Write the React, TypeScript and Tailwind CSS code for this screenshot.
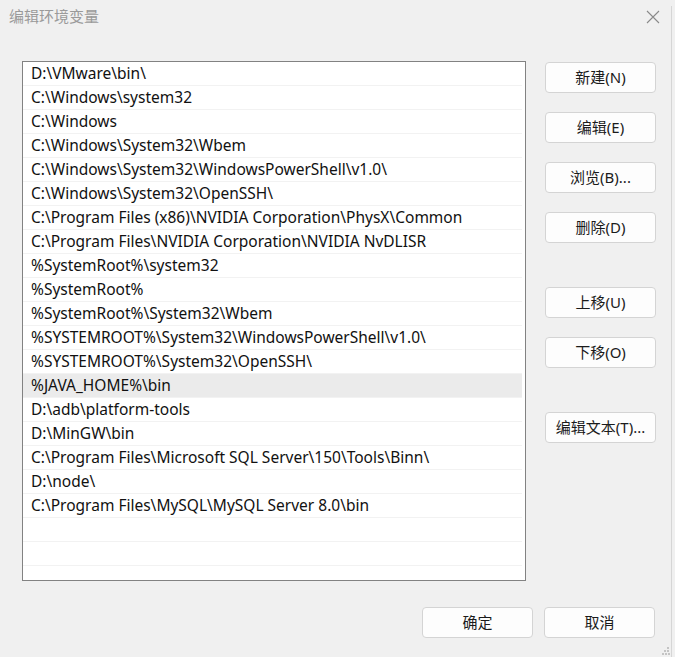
import React from 'react';

const paths = [
    'D:\\VMware\\bin\\',
    'C:\\Windows\\system32',
    'C:\\Windows',
    'C:\\Windows\\System32\\Wbem',
    'C:\\Windows\\System32\\WindowsPowerShell\\v1.0\\',
    'C:\\Windows\\System32\\OpenSSH\\',
    'C:\\Program Files (x86)\\NVIDIA Corporation\\PhysX\\Common',
    'C:\\Program Files\\NVIDIA Corporation\\NVIDIA NvDLISR',
    '%SystemRoot%\\system32',
    '%SystemRoot%',
    '%SystemRoot%\\System32\\Wbem',
    '%SYSTEMROOT%\\System32\\WindowsPowerShell\\v1.0\\',
    '%SYSTEMROOT%\\System32\\OpenSSH\\',
    '%JAVA_HOME%\\bin',
    'D:\\adb\\platform-tools',
    'D:\\MinGW\\bin',
    'C:\\Program Files\\Microsoft SQL Server\\150\\Tools\\Binn\\',
    'D:\\node\\',
    'C:\\Program Files\\MySQL\\MySQL Server 8.0\\bin',
    '',
    '',
    '',
];

function Btn({ label, className = '' }: { label: string; className?: string }) {
    return (
        <button
            className={`w-[111px] h-[31px] rounded-[4px] border border-[#d4d4d4] bg-[#fdfdfd] text-[15px] text-[#1b1b1b] flex items-center justify-center ${className}`}
        >
            {label}
        </button>
    );
}

export default function App() {
    return (
        <div
            className="relative w-[675px] h-[657px] overflow-hidden bg-[#f0f0f0]"
            style={{ fontFamily: '"Noto Sans", "Noto Sans CJK SC", sans-serif' }}
        >
            {/* title bar */}
            <div className="h-[33px] flex items-center justify-between pl-[9px] pr-[15px]">
                <span className="text-[15px] text-[#9a9a9a]" style={{ fontFamily: '"Noto Sans CJK SC", sans-serif' }}>
                    编辑环境变量
                </span>
                <svg width="14" height="14" viewBox="0 0 14 14" className="text-[#8a8a8a]">
                    <path d="M1 1L13 13M13 1L1 13" stroke="currentColor" strokeWidth="1.1" />
                </svg>
            </div>

            <div className="flex pl-[22px] pt-[28px]">
                {/* path list */}
                <div className="w-[504px] h-[520px] border border-[#828282] bg-white overflow-hidden">
                    {paths.map((p, i) => (
                        <div
                            key={i}
                            className={`h-[24px] pl-[8px] mr-[3px] flex items-center border-b border-[#f2f2f2] text-[15.5px] text-[#111] whitespace-nowrap ${i === 13 ? 'bg-[#ebebeb]' : ''}`}
                        >
                            {p}
                        </div>
                    ))}
                </div>

                {/* side buttons */}
                <div className="ml-[19px] pt-[1px] flex flex-col">
                    <Btn label="新建(N)" />
                    <Btn label="编辑(E)" className="mt-[19px]" />
                    <Btn label="浏览(B)..." className="mt-[19px]" />
                    <Btn label="删除(D)" className="mt-[19px]" />
                    <Btn label="上移(U)" className="mt-[44px]" />
                    <Btn label="下移(O)" className="mt-[19px]" />
                    <Btn label="编辑文本(T)..." className="mt-[44px]" />
                </div>
            </div>

            {/* bottom buttons */}
            <div className="flex justify-end gap-[11px] pr-[20px] pt-[26px]">
                <Btn label="确定" />
                <Btn label="取消" />
            </div>

            {/* window edge */}
            <div className="absolute top-[6px] bottom-0 right-[3px] w-px bg-[#d6d6d6]" />

            {/* resize grip */}
            <svg width="8" height="8" viewBox="0 0 8 8" className="absolute right-[5px] bottom-[2px]">
                <rect x="5" y="0" width="2" height="2" fill="#c4c4c4" />
                <rect x="2" y="3" width="2" height="2" fill="#c4c4c4" />
                <rect x="5" y="3" width="2" height="2" fill="#c4c4c4" />
                <rect x="0" y="6" width="2" height="2" fill="#c4c4c4" />
                <rect x="3" y="6" width="2" height="2" fill="#c4c4c4" />
                <rect x="6" y="6" width="2" height="2" fill="#c4c4c4" />
            </svg>
        </div>
    );
}
